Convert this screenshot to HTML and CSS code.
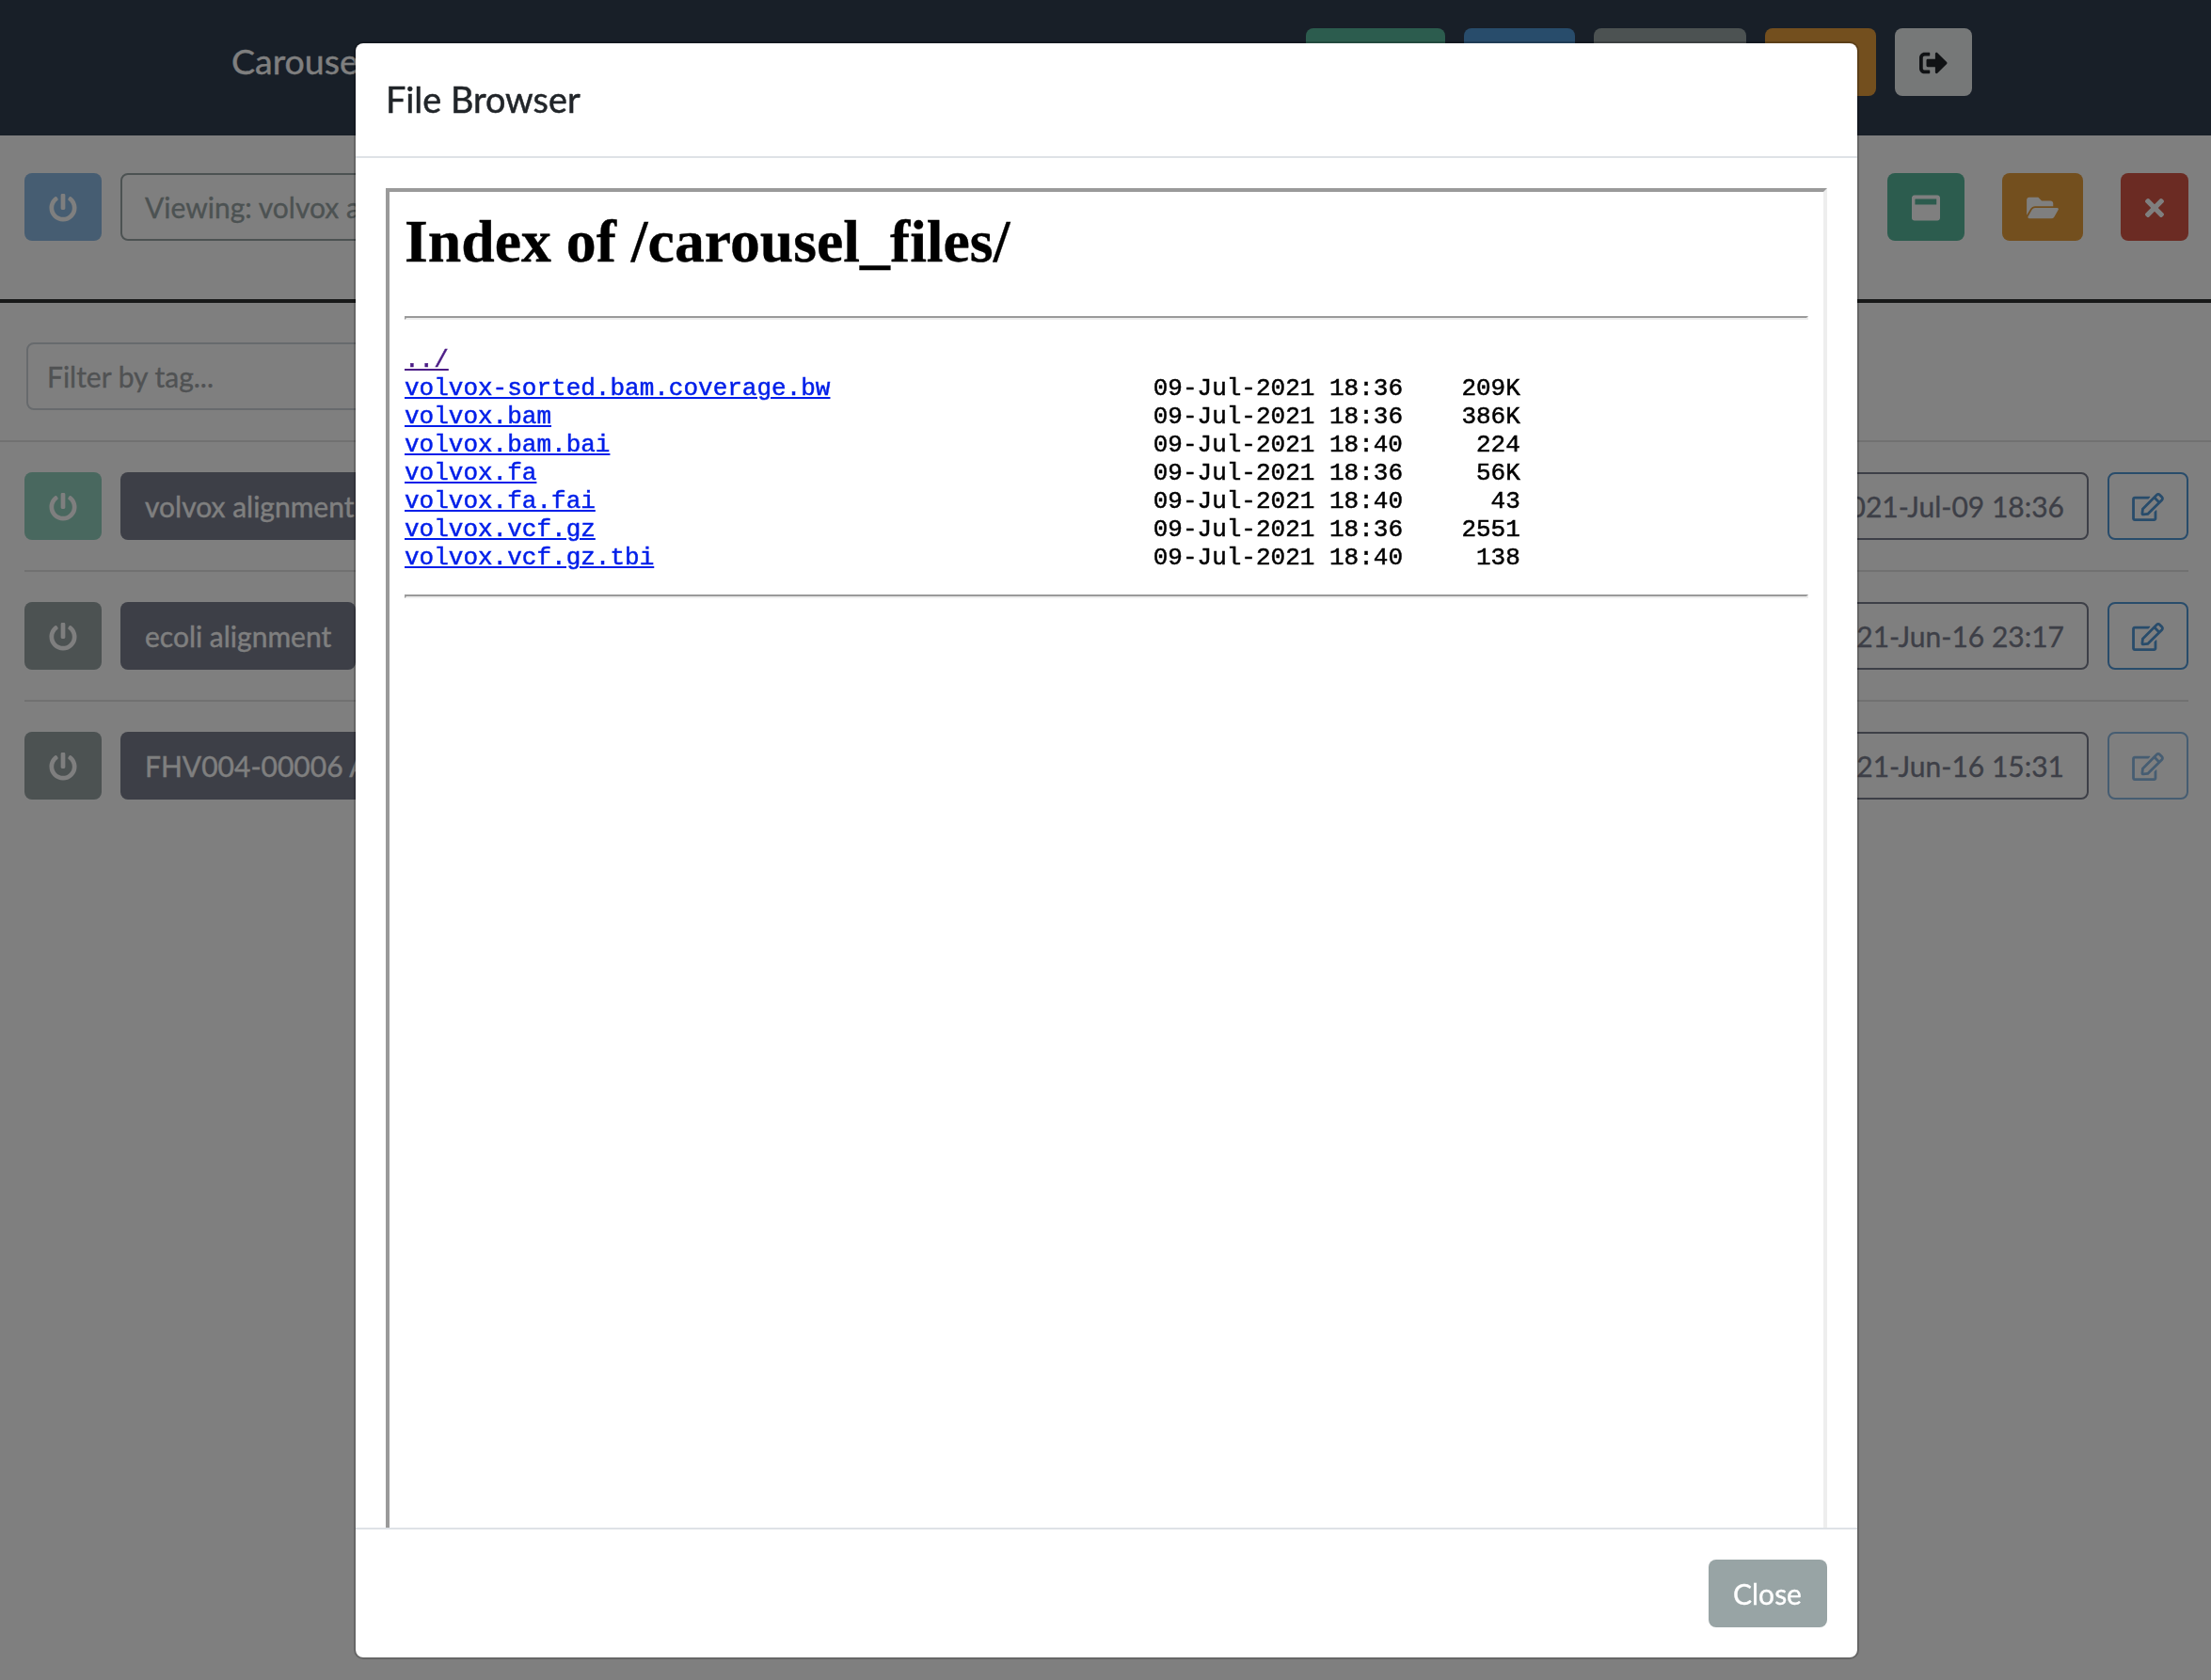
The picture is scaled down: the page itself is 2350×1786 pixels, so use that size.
FILE: index.html
```html
<!DOCTYPE html>
<html lang="en">
<head>
<meta charset="utf-8">
<title>Carousel</title>
<link rel="stylesheet" href="styles.css">
</head>
<body>
<svg class="sprite" aria-hidden="true">
  <symbol id="power" viewBox="0 0 512 512"><path d="M400 54.100c63 45 104 118.600 104 201.900 0 136.800-110.800 247.700-247.500 248C120 504.300 8.200 393 8 256.400 7.900 173.100 48.900 99.300 111.800 54.200c11.700-8.300 28-4.800 35 7.700L162.600 90c5.900 10.500 3.100 23.800-6.600 31-41.500 30.800-68 79.600-68 134.900-.1 92.300 74.500 168.100 168 168.100 91.600 0 168.600-74.200 168-169.100-.3-51.800-24.700-101.800-68.100-134-9.700-7.200-12.400-20.500-6.500-30.900l15.800-28.100c7-12.400 23.200-16.100 34.800-7.800zM296 264V24c0-13.300-10.700-24-24-24h-32c-13.300 0-24 10.700-24 24v240c0 13.300 10.700 24 24 24h32c13.300 0 24-10.700 24-24z"/></symbol>
  <symbol id="signout" viewBox="0 0 512 512"><path d="M497 273L329 441c-15 15-41 4.500-41-17v-96H152c-13.300 0-24-10.700-24-24v-96c0-13.300 10.700-24 24-24h136V88c0-21.400 25.900-32 41-17l168 168c9.300 9.400 9.300 24.600 0 34zM192 436v-40c0-6.600-5.400-12-12-12H96c-17.700 0-32-14.300-32-32V160c0-17.700 14.300-32 32-32h84c6.600 0 12-5.400 12-12V76c0-6.600-5.400-12-12-12H96c-53 0-96 43-96 96v192c0 53 43 96 96 96h84c6.600 0 12-5.400 12-12z"/></symbol>
  <symbol id="panel" viewBox="0 0 512 512"><path fill-rule="evenodd" d="M464 26H48C21.500 26 0 47.500 0 74v364c0 26.500 21.500 48 48 48h416c26.500 0 48-21.500 48-48V74c0-26.500-21.500-48-48-48zM448 192c0 2-2 4-6 4H64c-4 0-6-2-6-4V100c0-4 4-8 8-8h374c5 0 8 3 8 8z"/></symbol>
  <symbol id="folder" viewBox="0 0 576 512"><path d="M572.694 292.093L500.270 416.248A63.997 63.997 0 0 1 444.989 448H45.025c-18.523 0-30.064-20.093-20.731-36.093l72.424-124.155A64 64 0 0 1 152 256h399.964c18.523 0 30.064 20.093 20.730 36.093zM152 224h328v-48c0-26.510-21.490-48-48-48H272l-64-64H48C21.490 64 0 85.490 0 112v278.046l69.077-118.418C86.214 242.250 117.989 224 152 224z"/></symbol>
  <symbol id="times" viewBox="0 0 352 512"><path d="M242.720 256l100.070-100.070c12.280-12.280 12.280-32.190 0-44.480l-22.240-22.240c-12.280-12.280-32.190-12.280-44.480 0L176 189.280 75.930 89.210c-12.280-12.280-32.190-12.280-44.480 0L9.210 111.450c-12.280 12.280-12.280 32.190 0 44.480L109.280 256 9.210 356.070c-12.280 12.280-12.280 32.190 0 44.480l22.240 22.240c12.280 12.280 32.200 12.280 44.480 0L176 322.720l100.070 100.070c12.280 12.280 32.200 12.280 44.480 0l22.240-22.240c12.280-12.280 12.280-32.190 0-44.480L242.720 256z"/></symbol>
  <symbol id="edit" viewBox="0 0 576 512"><path d="M402.300 344.900l32-32c5-5 13.700-1.500 13.700 5.700V464c0 26.500-21.500 48-48 48H48c-26.500 0-48-21.500-48-48V112c0-26.500 21.500-48 48-48h273.500c7.100 0 10.700 8.600 5.700 13.700l-32 32c-1.500 1.500-3.500 2.300-5.700 2.300H48v352h352V350.500c0-2.100.8-4.100 2.300-5.600zm156.600-201.800L296.300 405.700l-90.400 10c-26.200 2.900-48.500-19.200-45.600-45.600l10-90.400L432.900 17.100c22.900-22.900 59.900-22.900 82.700 0l43.200 43.200c22.900 22.900 22.900 60 .1 82.800zM460.100 174L402 115.900 216.200 301.800l-7.300 65.300 65.300-7.300L460.100 174zm64.800-79.700l-43.200-43.200c-4.100-4.100-10.800-4.100-14.800 0L436 82l58.100 58.100 30.900-30.900c4-4.200 4-10.800-.1-14.900z"/></symbol>
</svg>

<nav class="navbar">
  <span class="brand">Carousel</span>
  <div class="nav-actions">
    <span class="btn success w-green"></span>
    <span class="btn info w-blue"></span>
    <span class="btn secondary w-gray"></span>
    <span class="btn warning w-blue"></span>
    <span class="btn light"><svg class="icon"><use href="#signout"/></svg></span>
  </div>
</nav>

<section class="viewer">
  <span class="btn info faded"><svg class="icon"><use href="#power"/></svg></span>
  <span class="btn outline-secondary grow">Viewing: volvox alignment</span>
  <div class="viewer-actions">
    <span class="btn success"><svg class="icon"><use href="#panel"/></svg></span>
    <span class="btn warning"><svg class="icon wide"><use href="#folder"/></svg></span>
    <span class="btn danger"><svg class="icon narrow"><use href="#times"/></svg></span>
  </div>
</section>

<section class="filter"><div class="input">Filter by tag...</div></section>

<main class="sessions">
  <div class="session">
    <span class="btn success faded"><svg class="icon"><use href="#power"/></svg></span>
    <span class="btn dark">volvox alignment</span>
    <span class="btn outline-dark date">2021-Jul-09 18:36</span>
    <span class="btn outline-info"><svg class="icon wide"><use href="#edit"/></svg></span>
  </div>
  <div class="session">
    <span class="btn secondary"><svg class="icon"><use href="#power"/></svg></span>
    <span class="btn dark">ecoli alignment</span>
    <span class="btn outline-dark date">2021-Jun-16 23:17</span>
    <span class="btn outline-info"><svg class="icon wide"><use href="#edit"/></svg></span>
  </div>
  <div class="session">
    <span class="btn secondary"><svg class="icon"><use href="#power"/></svg></span>
    <span class="btn dark">FHV004-00006 Alignment</span>
    <span class="btn outline-dark date">2021-Jun-16 15:31</span>
    <span class="btn outline-info faded"><svg class="icon wide"><use href="#edit"/></svg></span>
  </div>
</main>

<div class="backdrop">
  <div class="modal">
    <header class="modal-header"><h5>File Browser</h5></header>
    <div class="modal-body">
      <div class="listing">
        <h1>Index of /carousel_files/</h1>
        <hr>
<pre><a class="visited">../</a>
<a>volvox-sorted.bam.coverage.bw</a>                      09-Jul-2021 18:36    209K
<a>volvox.bam</a>                                         09-Jul-2021 18:36    386K
<a>volvox.bam.bai</a>                                     09-Jul-2021 18:40     224
<a>volvox.fa</a>                                          09-Jul-2021 18:36     56K
<a>volvox.fa.fai</a>                                      09-Jul-2021 18:40      43
<a>volvox.vcf.gz</a>                                      09-Jul-2021 18:36    2551
<a>volvox.vcf.gz.tbi</a>                                  09-Jul-2021 18:40     138
</pre>
        <hr>
      </div>
    </div>
    <footer class="modal-footer"><span class="btn close">Close</span></footer>
  </div>
</div>
</body>
</html>
```

FILE: styles.css
```css
* { box-sizing: border-box; }

body {
  margin: 0;
  height: 1786px;
  overflow: hidden;
  background: #fff;
  color: #212529;
  font: 30px/45px Lato, "Noto Sans", sans-serif;
  -webkit-text-stroke: .35px currentColor;
}

.sprite { display: none; }

.icon { width: 30px; height: 30px; margin-top: 1px; fill: currentColor; display: block; }
.icon.wide { width: 34px; }
.icon.narrow { width: 20px; }

.btn {
  display: inline-flex;
  align-items: center;
  flex: none;
  height: 72px;
  padding: 0 24px;
  border: 2px solid transparent;
  border-radius: 8px;
  color: #fff;
  white-space: nowrap;
}

.success { background: #59b99c; }
.info { background: #5198d7; }
.secondary { background: #98a4a5; }
.warning { background: #e79e3d; }
.danger { background: #d75646; }
.light { background: #ecf0f1; color: #212529; }
.dark { background: #7a7e8e; }
.outline-secondary { border-color: #98a4a5; color: #98a4a5; }
.outline-dark { border-color: #7a7e8e; color: #7a7e8e; }
.outline-info { border-color: #5198d7; color: #5198d7; }
.faded { opacity: .65; }

.navbar {
  display: flex;
  justify-content: space-between;
  height: 144px;
  padding: 30px 254px 0 246px;
  background: #303e51;
}
.brand { color: #fff; font-size: 37.5px; line-height: 70px; }
.nav-actions { display: flex; gap: 20px; }
.w-green { width: 148px; }
.w-blue { width: 118px; }
.w-gray { width: 162px; }

.viewer {
  display: flex;
  gap: 20px;
  height: 178px;
  padding: 40px 24px 0 26px;
  border-bottom: 4px solid #313333;
}
.grow { flex: 0 1 1000px; }
.viewer-actions { display: flex; gap: 40px; margin-left: auto; }

.filter { height: 148px; padding: 42px 28px 0; border-bottom: 2px solid #e2e2e2; }
.input {
  width: 1000px;
  height: 72px;
  padding: 12px 20px;
  border: 2px solid #ced4da;
  border-radius: 8px;
  color: #a0a4a7;
}

.sessions { padding: 0 24px 0 26px; }
.session {
  display: flex;
  gap: 20px;
  height: 138px;
  padding-top: 32px;
  border-bottom: 2px solid #e2e2e2;
}
.session:last-child { border-bottom: 0; }
.date { margin-left: auto; }

.backdrop {
  position: fixed;
  inset: 0;
  display: flex;
  justify-content: center;
  align-items: flex-start;
  padding: 44px 0 0 2px;
  background: rgba(0, 0, 0, .5);
}
.modal {
  display: flex;
  flex-direction: column;
  width: 1600px;
  height: 1720px;
  background: #fff;
  background-clip: padding-box;
  border: 2px solid rgba(0, 0, 0, .2);
  border-radius: 10px;
}
.modal-header { height: 122px; padding: 32px; border-bottom: 2px solid #dee2e6; }
.modal-header h5 {
  margin: 0;
  font-size: 37.8px;
  line-height: 55px;
  font-weight: 400;
  -webkit-text-stroke-width: .5px;
}
.modal-body { flex: 1; min-height: 0; padding: 32px 32px 0; overflow: hidden; }
.modal-footer {
  display: flex;
  justify-content: flex-end;
  height: 138px;
  padding: 32px;
  border-top: 2px solid #dee2e6;
}
.close { background: #98a4a5; width: 126px; }

.listing {
  height: 1600px;
  padding: 16px;
  border: 4px solid;
  border-color: #9a9a9a #eee #eee #9a9a9a;
  color: #000;
}
.listing h1 {
  margin: 0 0 42px;
  font: bold 63.75px/74px "Liberation Serif", serif;
}
.listing hr {
  height: 4px;
  margin: 0;
  border: 2px solid;
  border-color: #9a9a9a #eee #eee #9a9a9a;
}
.listing pre {
  margin: 28px 0 24px;
  font: 26px/30px "Liberation Mono", monospace;
  -webkit-text-stroke-width: .5px;
}
.listing a {
  color: #001ee9;
  text-decoration: underline;
  text-decoration-thickness: 2px;
  text-underline-offset: 2px;
}
.listing a.visited { color: #4b1c86; }
```
